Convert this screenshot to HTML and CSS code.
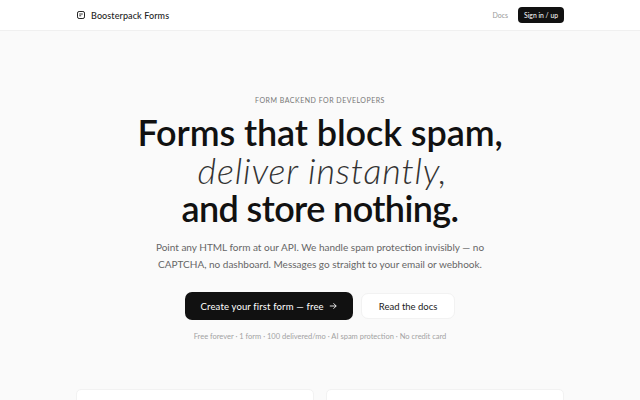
FILE: index.html
```html
<!DOCTYPE html>
<html>
<head>
    <title>Boosterpack Forms</title>
    <link rel="stylesheet" href="styles.css">
</head>
<body>
    <!-- Barra superior -->
    <nav class="navbar">
        <div class="navbar-container">
            <a class="navbar-brand" href="#">
                <svg class="brand-icon" viewBox="0 0 8 8" width="8" height="8">
                    <rect x="0.5" y="0.5" width="7" height="7" rx="1.6" fill="none" stroke="#222" stroke-width="1"/>
                    <path d="M2.2 3H5.8M2.2 4.8H4.2" fill="none" stroke="#222" stroke-width="0.9"/>
                </svg>
                <span>Boosterpack Forms</span>
            </a>
            <div class="navbar-menu">
                <a class="nav-link" href="#">Docs</a>
                <a class="nav-button" href="#">Sign in / up</a>
            </div>
        </div>
    </nav>

    <section class="hero">
        <div class="eyebrow">FORM BACKEND FOR DEVELOPERS</div>
        <h1>Forms that block spam,<br><em>deliver instantly,</em><br><span class="last-line">and store nothing.</span></h1>
        <p class="lead">Point any HTML form at our API. We handle spam protection invisibly — no<br>CAPTCHA, no dashboard. Messages go straight to your email or webhook.</p>
        <div class="actions">
            <a class="btn btn-dark" href="#">Create your first form — free
                <svg viewBox="0 0 10 10" width="8" height="8">
                    <path d="M1 5H9M5.6 1.6L9 5L5.6 8.4" fill="none" stroke="#fff" stroke-width="1.1"/>
                </svg>
            </a>
            <a class="btn btn-light" href="#">Read the docs</a>
        </div>
        <div class="note">Free forever · 1 form · 100 delivered/mo · AI spam protection · No credit card</div>
    </section>

    <!-- Tarjetas -->
    <section class="cards">
        <div class="card"></div>
        <div class="card"></div>
    </section>
</body>
</html>
```

FILE: styles.css
```css
html, body {
    height: 400px;
    overflow: hidden;
}
body {
    font-family: "Lato", Arial, sans-serif;
    margin: 0;
    padding: 0;
    background-color: #fafafa;
    color: #111;
}
a {
    text-decoration: none;
}
.navbar {
    background-color: #fff;
    border-bottom: 1px solid #f0f0f0;
    height: 30px;
}
.navbar-container {
    display: flex;
    align-items: center;
    justify-content: space-between;
    height: 30px;
    margin: 0 76px 0 77px;
}
.navbar-brand {
    display: flex;
    align-items: center;
    gap: 6px;
    font-size: 9px;
    font-weight: 500;
    color: #222;
    letter-spacing: 0.1px;
}
.brand-icon {
    display: block;
}
.navbar-menu {
    display: flex;
    align-items: center;
    gap: 10px;
}
.nav-link {
    font-size: 7px;
    color: #999;
}
.nav-button {
    background-color: #111;
    color: #fff;
    font-size: 6.8px;
    padding: 4px 6px;
    border-radius: 4px;
    line-height: 8px;
}
.hero {
    display: flex;
    flex-direction: column;
    align-items: center;
    text-align: center;
    padding-top: 65px;
}
.eyebrow {
    font-size: 7px;
    line-height: 9px;
    letter-spacing: 0.5px;
    color: #777;
}
h1 {
    margin: 8px 0 0;
    font-size: 36px;
    line-height: 38px;
    font-weight: 600;
    letter-spacing: -0.1px;
    color: #111;
}
h1 em {
    font-weight: 300;
    letter-spacing: 0.8px;
    margin-left: 5px;
    color: #333;
}
.last-line {
    letter-spacing: -0.6px;
}
.lead {
    margin: 12px 0 0;
    font-size: 10px;
    line-height: 17px;
    color: #666;
}
.actions {
    display: flex;
    align-items: center;
    gap: 8px;
    margin-top: 19px;
}
.btn {
    display: flex;
    align-items: center;
    gap: 5px;
    box-sizing: border-box;
    font-size: 9.5px;
    border-radius: 7px;
}
.btn-dark {
    background-color: #111;
    color: #fff;
    height: 28px;
    padding: 0 16px;
    letter-spacing: 0.15px;
}
.btn-light {
    background-color: #fff;
    color: #222;
    height: 26px;
    padding: 0 17px;
    border: 1px solid #f2f2f2;
}
.note {
    margin-top: 12px;
    font-size: 7.5px;
    line-height: 10px;
    color: #a2a2a2;
}
.cards {
    display: grid;
    grid-template-columns: 1fr 1fr;
    gap: 12px;
    margin: 47px 76px 0 76px;
}
.card {
    height: 60px;
    background-color: #fff;
    border: 1px solid #f2f2f2;
    border-radius: 5px;
}
```
